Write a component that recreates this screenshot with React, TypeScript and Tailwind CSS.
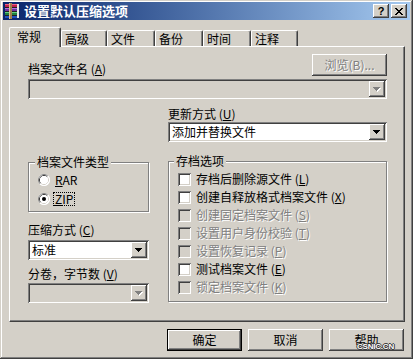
import React from "react";

// win2000 bevels
const raised =
  "shadow-[inset_-1px_-1px_#404040,inset_1px_1px_#ffffff,inset_-2px_-2px_#808080,inset_2px_2px_#d4d0c8]";
const sunken =
  "shadow-[inset_1px_1px_#808080,inset_-1px_-1px_#ffffff,inset_2px_2px_#404040,inset_-2px_-2px_#d4d0c8]";
const etched = "border border-[#808080] shadow-[1px_1px_0_#ffffff,inset_1px_1px_0_#ffffff]";
const grayText = "text-[#808080] [text-shadow:1px_1px_0_#ffffff]";

function Key({ text, k }: { text: string; k: string }) {
  return (
    <>
      {text} (<u>{k}</u>)
    </>
  );
}

function Arrow({ disabled }: { disabled?: boolean }) {
  const d = "M0 0h7v1H0zM1 1h5v1H1zM2 2h3v1H2zM3 3h1v1H3z";
  return (
    <svg width="8" height="5" viewBox="0 0 8 5" shapeRendering="crispEdges">
      {disabled && <path d={d} fill="#ffffff" transform="translate(1 1)" />}
      <path d={d} fill={disabled ? "#808080" : "#000000"} />
    </svg>
  );
}

function Combo({
  className,
  value,
  disabled,
}: {
  className: string;
  value?: string;
  disabled?: boolean;
}) {
  return (
    <div
      className={`flex h-[20px] p-[2px] ${sunken} ${disabled ? "bg-[#d4d0c8]" : "bg-white"} ${className}`}
    >
      <div className="flex-1 pl-[2px] leading-[16px] whitespace-nowrap overflow-hidden">{value}</div>
      <div className={`w-[16px] flex items-center justify-center bg-[#d4d0c8] ${raised}`}>
        <Arrow disabled={disabled} />
      </div>
    </div>
  );
}

function Check({ text, k, disabled }: { text: string; k: string; disabled?: boolean }) {
  return (
    <div className="flex items-center h-[18px]">
      <div
        className={`w-[13px] h-[13px] shrink-0 ${sunken} ${disabled ? "bg-[#d4d0c8]" : "bg-white"}`}
      />
      <span className={`ml-[5px] leading-[14px] whitespace-nowrap ${disabled ? grayText : ""}`}>
        <Key text={text} k={k} />
      </span>
    </div>
  );
}

function Radio({ checked, first, rest }: { checked?: boolean; first: string; rest: string }) {
  return (
    <div className="flex items-center h-[19px]">
      <svg width="12" height="12" viewBox="0 0 12 12" className="shrink-0">
        <circle cx="6" cy="6" r="6" fill="#ffffff" />
        <path d="M2.11 9.89 A5.5 5.5 0 0 1 9.89 2.11" fill="none" stroke="#808080" strokeWidth="1" />
        <path d="M9.89 2.11 A5.5 5.5 0 0 1 2.11 9.89" fill="none" stroke="#ffffff" strokeWidth="1" />
        <path d="M2.82 9.18 A4.5 4.5 0 0 1 9.18 2.82" fill="none" stroke="#404040" strokeWidth="1" />
        <path d="M9.18 2.82 A4.5 4.5 0 0 1 2.82 9.18" fill="none" stroke="#d4d0c8" strokeWidth="1" />
        <circle cx="6" cy="6" r="4" fill="#ffffff" />
        {checked && <circle cx="6" cy="6" r="2" fill="#000000" />}
      </svg>
      <span
        className={`ml-[3px] px-[1px] leading-[12px] border ${checked ? "border-dotted border-black" : "border-transparent"}`}
      >
        <u>{first}</u>
        {rest}
      </span>
    </div>
  );
}

function Button({
  label,
  isDefault,
  disabled,
  className,
}: {
  label: React.ReactNode;
  isDefault?: boolean;
  disabled?: boolean;
  className: string;
}) {
  return (
    <div
      className={`flex items-center justify-center bg-[#d4d0c8] ${raised} ${isDefault ? "border border-black" : ""} ${className}`}
    >
      <span className={`leading-[14px] ${disabled ? grayText : ""}`}>{label}</span>
    </div>
  );
}

function RarIcon() {
  return (
    <svg width="16" height="16" viewBox="0 0 16 16" shapeRendering="crispEdges">
      <rect x="1" y="1" width="12" height="3" fill="#c0204a" />
      <rect x="1" y="1" width="12" height="1" fill="#f06080" />
      <rect x="1" y="5" width="12" height="3" fill="#7030a0" />
      <rect x="1" y="5" width="12" height="1" fill="#b070e0" />
      <rect x="1" y="9" width="12" height="3" fill="#208040" />
      <rect x="1" y="9" width="12" height="1" fill="#60d080" />
      <rect x="1" y="13" width="12" height="2" fill="#2050c0" />
      <rect x="1" y="4" width="12" height="1" fill="#202020" />
      <rect x="1" y="8" width="12" height="1" fill="#202020" />
      <rect x="1" y="12" width="12" height="1" fill="#202020" />
      <rect x="5" y="0" width="3" height="16" fill="#a08050" />
      <rect x="5" y="0" width="1" height="16" fill="#e0c090" />
      <rect x="13" y="1" width="2" height="14" fill="#e8e8e8" />
    </svg>
  );
}

const tabs = [
  { label: "高级", w: "w-[46px]" },
  { label: "文件", w: "w-[48px]" },
  { label: "备份", w: "w-[48px]" },
  { label: "时间", w: "w-[48px]" },
  { label: "注释", w: "w-[47px]" },
];

export default function App() {
  return (
    <div className="relative w-[413px] h-[359px] bg-[#d4d0c8] shadow-[inset_-1px_-1px_#404040,inset_1px_1px_#d4d0c8,inset_-2px_-2px_#808080,inset_2px_2px_#ffffff] px-[3px] pt-[2px] flex flex-col text-[12px] text-black font-['Noto_Sans_CJK_SC',sans-serif]">
      {/* Title bar */}
      <div className="h-[18px] flex items-center bg-linear-to-r from-[#0a246a] to-[#a6caf0] pl-[1px] pr-[3px]">
        <RarIcon />
        <span className="ml-[4px] text-[13px] font-bold text-white leading-[16px]">设置默认压缩选项</span>
        <div className="ml-auto flex gap-[2px]">
          <div className={`w-[16px] h-[14px] bg-[#d4d0c8] ${raised} flex items-center justify-center`}>
            <span className="text-[11px] font-bold leading-[11px] font-['Liberation_Sans',sans-serif]">?</span>
          </div>
          <div className={`w-[16px] h-[14px] bg-[#d4d0c8] ${raised} flex items-center justify-center`}>
            <svg width="8" height="7" viewBox="0 0 8 7" shapeRendering="crispEdges">
              <path
                d="M0 0h2v1H0zM6 0h2v1H6zM1 1h2v1H1zM5 1h2v1H5zM2 2h4v1H2zM3 3h2v1H3zM2 4h4v1H2zM1 5h2v1H1zM5 5h2v1H5zM0 6h2v1H0zM6 6h2v1H6z"
                fill="#000000"
              />
            </svg>
          </div>
        </div>
      </div>

      {/* Tabs */}
      <div className="mt-[7px] ml-[6px] flex items-end">
        <div className="relative z-10 -mb-[1px] w-[52px] h-[20px] bg-[#d4d0c8] border-l border-t border-white border-r border-r-[#404040] rounded-tl-[2px] rounded-tr-[2px] shadow-[inset_-1px_0_#808080] pl-[7px] pt-[2px] leading-[14px]">
          常规
        </div>
        {tabs.map((t) => (
          <div
            key={t.label}
            className={`${t.w} h-[16px] border-l border-t border-white border-r border-r-[#404040] rounded-tl-[2px] rounded-tr-[2px] shadow-[inset_-1px_0_#808080] pl-[3px] pt-[1px] leading-[14px]`}
          >
            {t.label}
          </div>
        ))}
      </div>

      {/* Tab panel */}
      <div className="ml-[6px] w-[396px] h-[276px] border-l border-t border-white border-r border-b border-r-[#404040] border-b-[#404040] shadow-[inset_-1px_-1px_#808080] pl-[18px] pt-[7px]">
        <div className="w-[359px] flex items-end justify-between">
          <span className="leading-[14px]">
            <Key text="档案文件名" k="A" />
          </span>
          <Button label="浏览(B)..." disabled className="w-[75px] h-[22px]" />
        </div>
        <Combo className="mt-[3px] w-[359px]" disabled />

        <div className="mt-[8px] flex gap-[19px]">
          {/* left column */}
          <div className="w-[121px] flex flex-col">
            <fieldset className={`mt-[48px] ${etched}`}>
              <legend className="ml-[6px] px-[2px] bg-[#d4d0c8] leading-[14px]">档案文件类型</legend>
              <div className="pl-[9px] pt-[1px] pb-[3px]">
                <Radio first="R" rest="AR" />
                <Radio first="Z" rest="IP" checked />
              </div>
            </fieldset>
            <span className="mt-[11px] leading-[14px]">
              <Key text="压缩方式" k="C" />
            </span>
            <Combo className="mt-[3px] w-[121px]" value="标准" />
            <span className="mt-[7px] leading-[14px] whitespace-nowrap">
              分卷，字节数 (<u>V</u>)
            </span>
            <Combo className="mt-[2px] w-[121px]" disabled />
          </div>

          {/* right column */}
          <div className="w-[219px] flex flex-col">
            <span className="leading-[14px]">
              <Key text="更新方式" k="U" />
            </span>
            <Combo className="mt-[1px] w-[219px]" value="添加并替换文件" />
            <fieldset className={`mt-[12px] ${etched}`}>
              <legend className="ml-[5px] px-[2px] bg-[#d4d0c8] leading-[14px]">存档选项</legend>
              <div className="pl-[9px] pt-[2px] pb-[5px]">
                <Check text="存档后删除源文件" k="L" />
                <Check text="创建自释放格式档案文件" k="X" />
                <Check text="创建固定档案文件" k="S" disabled />
                <Check text="设置用户身份校验" k="T" disabled />
                <Check text="设置恢复记录" k="P" disabled />
                <Check text="测试档案文件" k="E" />
                <Check text="锁定档案文件" k="K" disabled />
              </div>
            </fieldset>
          </div>
        </div>
      </div>

      {/* Dialog buttons */}
      <div className="mt-[7px] mr-[6px] flex justify-end gap-[6px]">
        <Button label="确定" isDefault className="w-[75px] h-[22px]" />
        <Button label="取消" className="w-[75px] h-[22px]" />
        <Button label="帮助" className="w-[75px] h-[22px]" />
      </div>

      {/* watermark */}
      <span className="absolute right-[19px] top-[342px] text-[8px] font-bold leading-[10px] tracking-[-0.2px] text-white font-['Liberation_Sans',sans-serif] [text-shadow:1px_0_#333,-1px_0_#333,0_1px_#333,0_-1px_#333]">
        CSNIC.CN
      </span>
    </div>
  );
}
